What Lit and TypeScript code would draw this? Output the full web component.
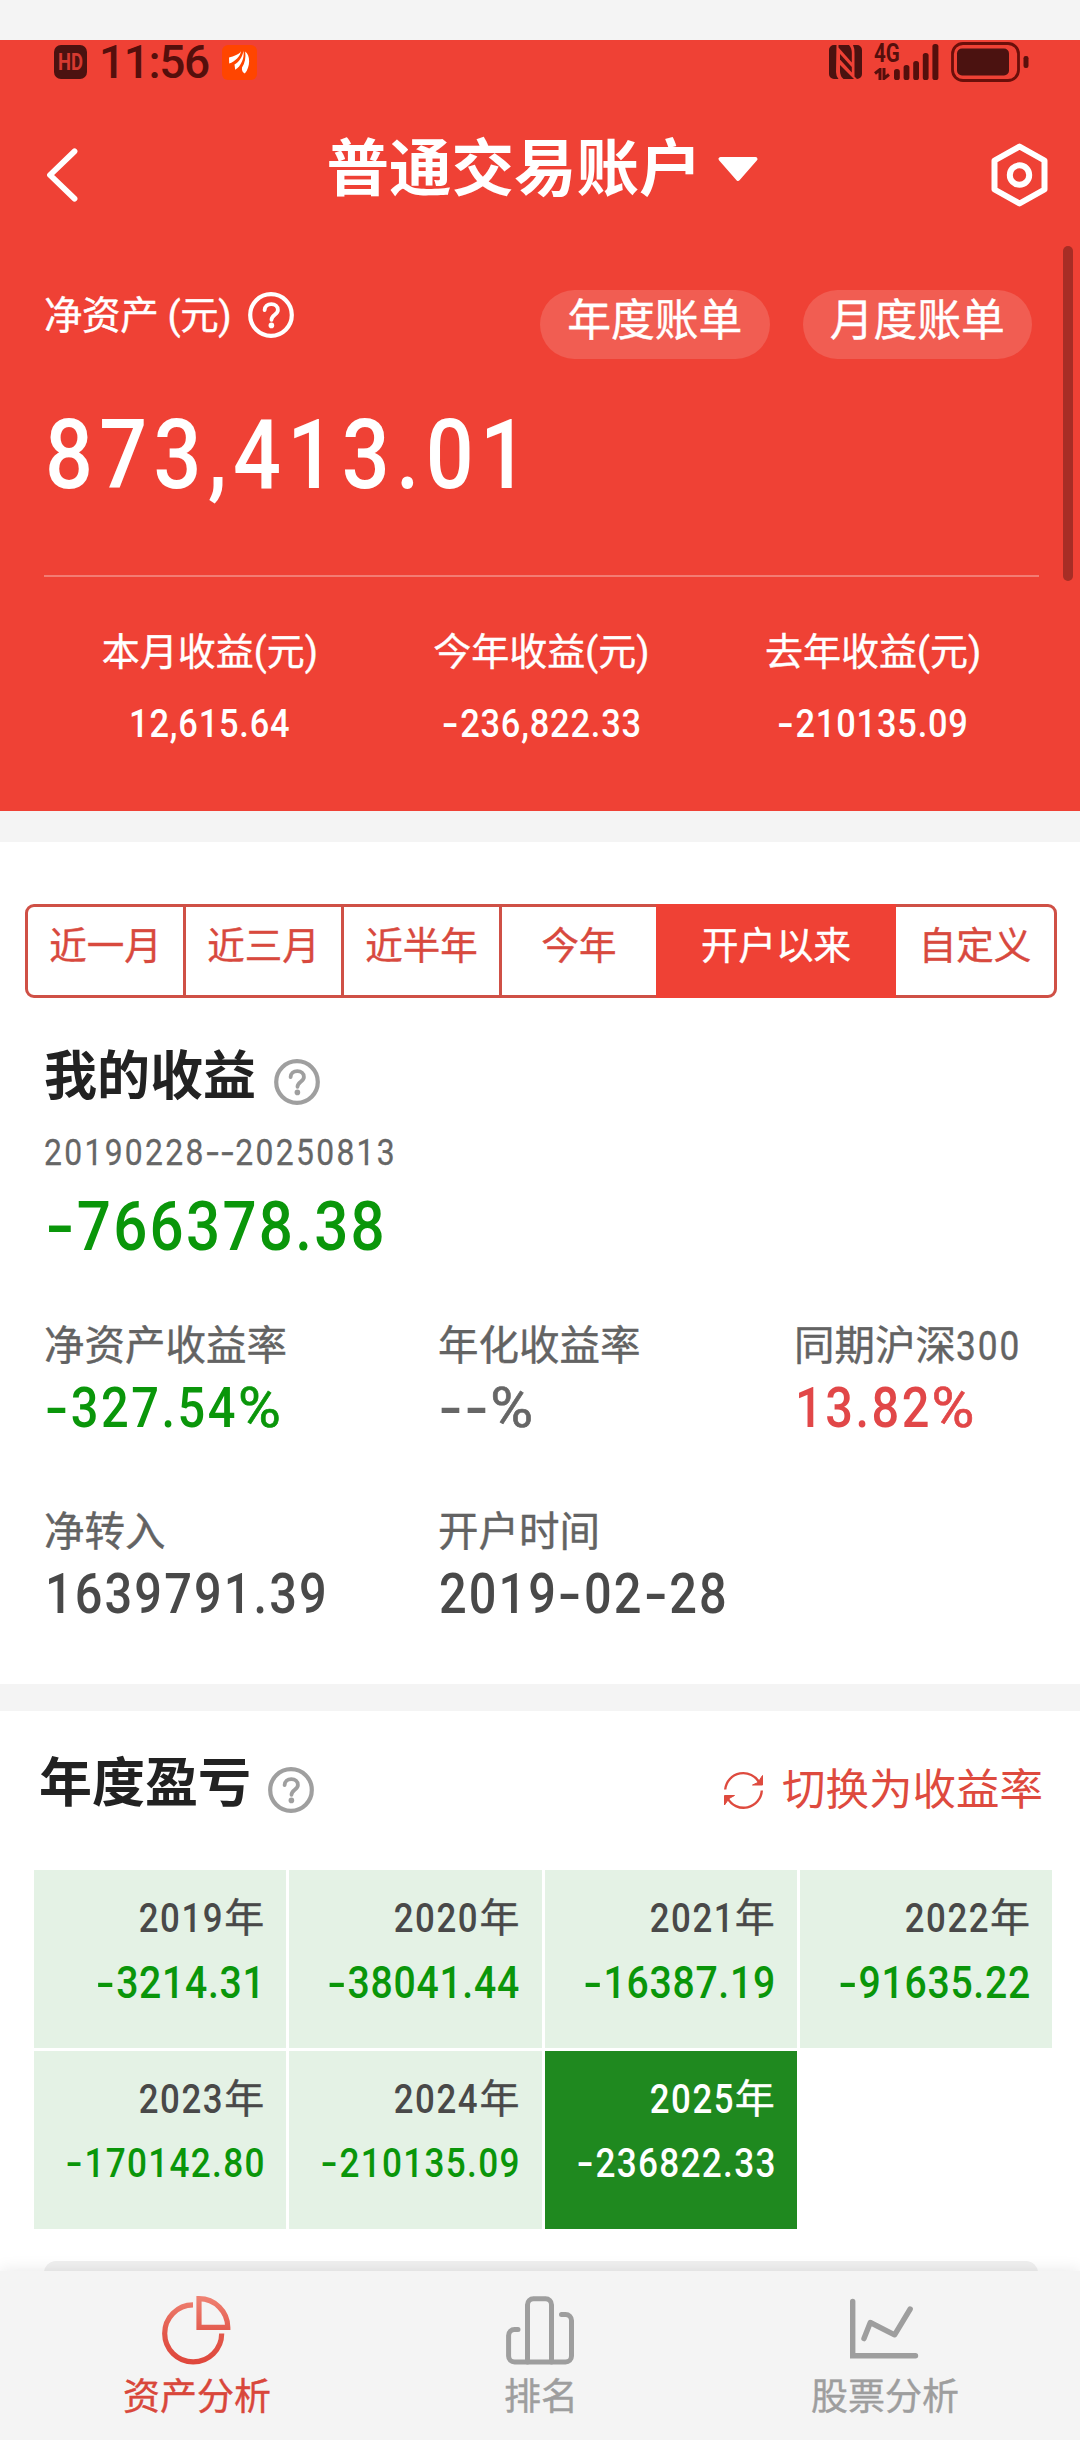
import { LitElement, html, css, svg } from "lit";
import { customElement, property } from "lit/decorators.js";
import { classMap } from "lit/directives/class-map.js";

interface Stat { label: string; digits?: string; value: string; tone: string; }
interface YearCell { year: string; value: string; active?: boolean; }

const SUMMARY = [
  { label: "本月收益(元)", value: "12,615.64" },
  { label: "今年收益(元)", value: "-236,822.33" },
  { label: "去年收益(元)", value: "-210135.09" },
];

const RANGES = ["近一月", "近三月", "近半年", "今年", "开户以来", "自定义"];
const ACTIVE_RANGE = "开户以来";

const STATS: Stat[] = [
  { label: "净资产收益率", value: "-327.54%", tone: "down" },
  { label: "年化收益率", value: "--%", tone: "muted" },
  { label: "同期沪深", digits: "300", value: "13.82%", tone: "up" },
  { label: "净转入", value: "1639791.39", tone: "plain" },
  { label: "开户时间", value: "2019-02-28", tone: "plain" },
];

const YEARS: YearCell[] = [
  { year: "2019", value: "-3214.31" },
  { year: "2020", value: "-38041.44" },
  { year: "2021", value: "-16387.19" },
  { year: "2022", value: "-91635.22" },
  { year: "2023", value: "-170142.80" },
  { year: "2024", value: "-210135.09" },
  { year: "2025", value: "-236822.33", active: true },
];

/** Narrow figures, with the hyphen and the percent sign set wider than the digits. */
const num = (value: string) => html`<span class="num">${value
  .split(/(-|%)/)
  .filter((part) => part !== "")
  .map((part) => part === "-" ? html`<span class="dash">-</span>`
    : part === "%" ? html`<span class="pct">%</span>` : part)}</span>`;

@customElement("help-icon")
export class HelpIcon extends LitElement {
  static styles = css`
    :host { display: block; flex: none; width: 46px; height: 46px; }
    svg { display: block; }
  `;
  render() {
    return html`<svg width="46" height="46" viewBox="0 0 46 46" fill="none" stroke="currentColor">
      <circle cx="23" cy="23" r="20.8" stroke-width="4.2"></circle>
      <path d="M16.6 18.2c.2-3.8 2.9-6 6.7-6s6.6 2.3 6.6 5.7c0 4.8-6.4 4.9-6.4 9.9" stroke-width="3.8" stroke-linecap="round"></path>
      <circle cx="23.4" cy="33.4" r="2.8" fill="currentColor" stroke="none"></circle>
    </svg>`;
  }
}

@customElement("status-bar")
export class StatusBar extends LitElement {
  static styles = css`
    :host { display: flex; align-items: center; height: 44px; padding: 0 51px 0 54px; color: #4b1210;
      font-family: Roboto, "Noto Sans CJK SC", sans-serif; }
    svg { display: block; flex: none; }
    .hd { display: flex; align-items: center; justify-content: center; width: 33px; height: 34px;
      border-radius: 7px; background: #4b1210; color: #d63a30; font-size: 23px; font-weight: 700; }
    .hd span { transform: scaleX(.8); }
    .time { margin-left: 12px; width: 110px; font-size: 46px; line-height: 44px; letter-spacing: -1.4px; font-weight: 500;
      color: #550f0c; white-space: nowrap; }
    .app { margin-left: 13px; }
    .spacer { flex: 1; }
    .net { display: grid; grid-template-columns: 28px 36px; margin-left: 12px; width: 64px; height: 36px; }
    .gen { display: flex; flex-direction: column; gap: 5px; }
    .gen b { display: block; width: 28px; height: 19px; font-size: 25px; line-height: 19px; font-weight: 700; color: #550f0c;
      transform: scaleX(.82); transform-origin: left; }
    .bars { margin-left: -8px; }
    .battery { margin-left: 13px; }
  `;
  render() {
    return html`
      <div class="hd"><span>HD</span></div>
      <div class="time">11:56</div>
      <svg class="app" width="35" height="35" viewBox="0 0 35 35">
        <rect width="35" height="35" rx="6" fill="#ff4500"></rect>
        <g fill="#fff">
          <path d="M7 12.500C12 11 17 9.500 19 6.200 18.500 11 13 16.500 7.200 18.500Z"></path>
          <path d="M12.500 19.500C17 17 20.500 12 21.400 6 22.800 12.500 19 21.500 13.200 24.800Z"></path>
          <path d="M20 22.500C23 18 24 12.500 23.200 6.500 28.500 10 28.500 22 22.800 28.600 20.600 27.500 19.600 25.500 20 22.500Z"></path>
        </g>
      </svg>
      <div class="spacer"></div>
      <svg width="33" height="34" viewBox="0 0 33 34">
        <path d="M7.500 0H5A5 5 0 0 0 0 5V29A5 5 0 0 0 5 34H9.500Q7 31 7 27Z" fill="#4b1210"></path>
        <path d="M9.500 0H20Q22.800 3 22.800 8V17.500L9.500 2.500Z" fill="#4b1210"></path>
        <path d="M11 9L22.800 22V27.500L11 14.500Z" fill="#4b1210"></path>
        <path d="M11 20L25 34H14.500Q11 31 11 26Z" fill="#4b1210"></path>
        <path d="M24 0H28A5 5 0 0 1 33 5V29A5 5 0 0 1 28 34L25.500 31.500V8Q25.500 3 24 0Z" fill="#4b1210"></path>
      </svg>
      <div class="net">
        <div class="gen">
          <b>4G</b>
          <svg width="16" height="12" viewBox="0 0 16 12" fill="none" stroke="#550f0c" stroke-width="3">
            <path d="M6 12V1.500L1 5.500M10 0V10.500L15 6.500"></path>
          </svg>
        </div>
        <svg class="bars" width="45" height="36" viewBox="0 0 45 36" fill="#550f0c">
          <rect x="0" y="25" width="5.800" height="11" rx="2.600"></rect>
          <rect x="9.600" y="21" width="5.800" height="15" rx="2.600"></rect>
          <rect x="19.200" y="17" width="5.800" height="19" rx="2.600"></rect>
          <rect x="28.800" y="9" width="5.800" height="27" rx="2.600"></rect>
          <rect x="38.400" y="0" width="6" height="36" rx="2.600"></rect>
        </svg>
      </div>
      <svg class="battery" width="78" height="40" viewBox="0 0 78 40">
        <rect x="1.500" y="1.500" width="66" height="37" rx="10.500" fill="none" stroke="#6b0f0a" stroke-width="2.800"></rect>
        <rect x="6" y="6.500" width="52" height="27" rx="5" fill="#4b1210"></rect>
        <rect x="72.500" y="14" width="5" height="12" rx="2.200" fill="#5a100c"></rect>
      </svg>`;
  }
}

@customElement("tab-item")
export class TabItem extends LitElement {
  @property() icon = "pie";
  @property() label = "";
  static styles = css`
    :host { display: flex; flex-direction: column; align-items: center; padding-top: 25px; color: #9e9e9e; }
    svg { display: block; }
    .label { margin-top: 11px; padding-left: 2px; height: 44px; line-height: 44px; font-size: 37px; white-space: nowrap;
      -webkit-text-stroke: .4px currentColor; }
  `;
  private art() {
    if (this.icon === "pie") {
      return svg`
        <defs><linearGradient id="g" gradientUnits="userSpaceOnUse" x1="0" y1="0" x2="0" y2="69">
          <stop offset="0" stop-color="#ef8273"></stop><stop offset=".55" stop-color="#e2584b"></stop>
          <stop offset="1" stop-color="#df463b"></stop></linearGradient></defs>
        <g stroke="url(#g)" stroke-width="5.200" fill="none">
          <path d="M31 8.900A28.500 28.500 0 1 0 59.700 37.500"></path>
          <path d="M37 2.700V31.400H65.800A28.800 28.800 0 0 0 37 2.700Z"></path>
        </g>`;
    }
    if (this.icon === "bars") {
      return svg`<g stroke="currentColor" stroke-width="5" fill="none" stroke-linecap="round">
        <path d="M12 33.500H8.600a6 6 0 0 0-6 6V60a6 6 0 0 0 6 6H59.500a6 6 0 0 0 6-6V24.500a6 6 0 0 0-6-6H55.500"></path>
        <path d="M21.500 66V8.700a6 6 0 0 1 6-6h12a6 6 0 0 1 6 6V66"></path>
      </g>`;
    }
    return svg`<g stroke="currentColor" stroke-width="5.400" fill="none" stroke-linecap="round">
      <path d="M2.700 5.500V59.700H65.500" stroke-linejoin="miter"></path>
      <path d="M14 42.600L20.300 26.500 44.600 38.800 60.200 13" stroke-linejoin="round"></path>
    </g>`;
  }
  render() {
    return html`
      <svg width="69" height="69" viewBox="0 0 69 69">${this.art()}</svg>
      <div class="label">${this.label}</div>`;
  }
}

@customElement("app-root")
export class AppRoot extends LitElement {
  static styles = css`
    :host { display: block; width: 1080px; height: 2440px; overflow: hidden; background: #f4f4f4;
      font-family: Roboto, "Noto Sans CJK SC", sans-serif; }
    * { box-sizing: border-box; }
    svg { display: block; flex: none; }
    .page { display: flex; flex-direction: column; height: 2440px; position: relative; }
    .num { display: inline-block; font-weight: 500; letter-spacing: .055em; transform: scaleX(.87);
      transform-origin: left center; white-space: nowrap; }
    .dash { display: inline-block; margin: 0 .08em; letter-spacing: 0; padding-right: .03em; transform: scaleX(1.4); }
    .pct { display: inline-block; margin: 0 .07em; letter-spacing: 0; font-weight: 400; transform: scaleX(1.2);
      -webkit-text-stroke: .012em currentColor; }
    .assets-label, .bill, .summary-label, .range, .stat-label, .year-name > span:last-child {
      -webkit-text-stroke: .4px currentColor; }

    .hero { margin-top: 40px; height: 771px; flex: none; background: #ef4135; color: #fff; }
    .nav { display: grid; grid-template-columns: 1fr auto 1fr; align-items: center; height: 170px; padding: 0 32px 0 37px; }
    .back { margin: 11px 0 0 9px; }
    .account { display: flex; align-items: center; gap: 15px; font-size: 62.500px; line-height: 80px; font-weight: 700; }
    .account span { padding-top: 2px; }
    .gear { margin-top: 11px; justify-self: end; }
    .assets { display: flex; align-items: center; height: 145px; padding: 0 48px 4px 44px; }
    .assets-label { display: flex; align-items: center; margin-bottom: 19px; flex: 1; font-size: 38.500px; line-height: 50px; }
    .assets-label span { width: 204px; padding-top: 2px; white-space: nowrap; letter-spacing: -.4px; }
    .bills { display: flex; gap: 33px; }
    .bill { display: flex; align-items: center; justify-content: center; width: 229.500px; height: 69px; padding-bottom: 7px;
      border-radius: 35px; background: #f15d52; font-size: 43.800px; line-height: 60px; }
    .total { height: 110px; padding-left: 45px; font-size: 97px; line-height: 112px; }
    .total .num { letter-spacing: .075em; }
    .summary { display: grid; grid-template-columns: repeat(3, 1fr); margin: 66px 41px 0 44px; padding-top: 50px;
      border-top: 2px solid #f37c73; }
    .summary-item { display: flex; flex-direction: column; align-items: center; gap: 26px; }
    .summary-label { height: 50px; font-size: 38px; line-height: 51px; }
    .summary-value { height: 40px; font-size: 39.500px; line-height: 42px; }
    .summary-value .num { transform-origin: center; letter-spacing: .024em; }

    .panel { background: #fff; flex: none; }
    .profit { margin-top: 31px; height: 842px; padding-top: 62px; }
    .ranges { display: flex; margin: 0 23px 0 25px; height: 94px; border: 3px solid #cf5046; border-radius: 9px; color: #d8493e; }
    .range { display: flex; align-items: center; justify-content: center; width: 158px; padding-bottom: 10px;
      border-right: 3px solid #cf5046; font-size: 37.500px; line-height: 50px; }
    .range.bare { border-right: 0; }
    .range.short { width: 154px; }
    .range.on { width: 240px; margin: -3px 0; border-right: 0; background: #ef4135; color: #fff; }
    .heading { display: flex; align-items: center; height: 71px; color: #222; font-size: 53px; line-height: 71px; font-weight: 700; }
    .heading span { padding-top: 4px; }
    .heading help-icon { color: #9f9f9f; margin: 13px 0 0 18px; }
    .profit .heading { margin: 42px 0 0 44px; }
    .period { margin: 21px 0 0 44px; height: 40px; color: #666; font-size: 36.600px; line-height: 42px; }
    .period .num { font-weight: 400; letter-spacing: .073em; -webkit-text-stroke: .3px currentColor; }
    .gain { margin: 18px 0 0 45px; height: 71px; font-size: 69px; line-height: 73px; }
    .gain .num { letter-spacing: .038em; }
    .down { color: #0a960a; }
    .up { color: #e14748; }
    .muted { color: #666; }
    .plain { color: #494949; }
    .stats { display: grid; grid-template-columns: 394px 356px 1fr; row-gap: 69px; margin: 59px 0 0 44px; }
    .stat-label { height: 50px; color: #636363; font-size: 40.500px; line-height: 52px; white-space: nowrap; }
    .stat-label .num { font-weight: 400; }
    .stat-value { margin-top: 7px; height: 60px; padding-left: 1px; font-size: 56px; line-height: 62px; }
    .stat-value .num { letter-spacing: .052em; }
    .stat-value.plain .num { letter-spacing: .043em; }

    .yearly { margin-top: 27px; height: 560px; padding-top: 36px; overflow: hidden; }
    .yearly-head { display: flex; align-items: center; height: 73px; padding: 0 37px 0 39px; }
    .yearly-head .heading { flex: 1; }
    .yearly-head .heading span { padding-top: 2px; }
    .yearly-head help-icon { margin: 12px 0 0 17px; }
    .switch { display: flex; align-items: center; gap: 19px; margin-top: 13px; color: #de4a3e; font-size: 43.500px; line-height: 60px; }
    .switch span { padding-top: 2px; }
    .years { display: grid; grid-template-columns: repeat(4, 1fr); grid-auto-rows: 178.300px; gap: 2.700px 3px; margin: 50px 28px 0 34px; }
    .year { display: flex; flex-direction: column; align-items: flex-end; gap: 14px; padding: 24px 22px 0 0; background: #e4f2e5; }
    .year .num { transform-origin: right center; margin-right: -.055em; }
    .year-name { display: flex; height: 50px; line-height: 50px; font-size: 40px; color: #494949; }
    .year-name .num { margin-right: 0; letter-spacing: .045em; }
    .year-value { height: 50px; line-height: 50px; font-size: 45px; color: #0a960a; }
    .year-value .num { letter-spacing: .018em; margin-right: -.018em; }
    .year-value.long { font-size: 40.400px; }
    .year-value.long .num { letter-spacing: .037em; margin-right: -.037em; }
    .year.on { background: #1f891f; }
    .year.on .year-name, .year.on .year-value { color: #fff; }
    .peek { margin: 32px 42px 0 44px; height: 60px; border-radius: 12px; background: #f0f0f0; }

    .tabs { position: absolute; left: 0; bottom: 0; width: 1080px; height: 169px; display: grid;
      grid-template-columns: repeat(3, 1fr); padding: 0 24px; background: #f4f4f4; box-shadow: 0 0 16px rgba(0, 0, 0, .1); }
    .tabs tab-item.current { color: #d9473b; }
    .thumb { position: absolute; left: 1063px; top: 246px; width: 10px; height: 335px; border-radius: 5px; background: #a72d25; }
  `;

  private isLong(v: string) { return v.length > 9; }

  render() {
    return html`<div class="page">
      <header class="hero">
        <status-bar></status-bar>
        <div class="nav">
          <svg class="back" width="32" height="54" viewBox="0 0 32 54" fill="none" stroke="#fff" stroke-width="5.800" stroke-linecap="round" stroke-linejoin="round">
            <path d="M28.500 3.300L4 27 28.500 50.700"></path>
          </svg>
          <div class="account"><span>普通交易账户</span>
            <svg width="42" height="26" viewBox="0 0 42 26"><path d="M3.500 3H38.500L21 23Z" fill="#fff" stroke="#fff" stroke-width="4" stroke-linejoin="round"></path></svg>
          </div>
          <svg class="gear" width="57" height="64" viewBox="0 0 57 64" fill="none" stroke="#fff" stroke-width="6" stroke-linejoin="round">
            <path d="M28.500 3.500L53.500 17.500V46.500L28.500 60.500 3.500 46.500V17.500Z"></path>
            <circle cx="28.500" cy="32" r="9.700"></circle>
          </svg>
        </div>
        <div class="assets">
          <div class="assets-label"><span>净资产 (元)</span><help-icon></help-icon></div>
          <div class="bills"><div class="bill">年度账单</div><div class="bill">月度账单</div></div>
        </div>
        <div class="total">${num("873,413.01")}</div>
        <div class="summary">
          ${SUMMARY.map((s) => html`<div class="summary-item">
            <div class="summary-label">${s.label}</div>
            <div class="summary-value">${num(s.value)}</div>
          </div>`)}
        </div>
      </header>

      <section class="panel profit">
        <div class="ranges">
          ${RANGES.map((r, i) => html`<div class=${classMap({
            range: true, on: r === ACTIVE_RANGE, short: r === "今年", bare: r === "今年" || i === RANGES.length - 1,
          })}>${r}</div>`)}
        </div>
        <div class="heading"><span>我的收益</span><help-icon></help-icon></div>
        <div class="period">${num("20190228--20250813")}</div>
        <div class="gain down">${num("-766378.38")}</div>
        <div class="stats">
          ${STATS.map((s) => html`<div class="stat">
            <div class="stat-label">${s.label}${s.digits ? num(s.digits) : ""}</div>
            <div class="stat-value ${s.tone}">${num(s.value)}</div>
          </div>`)}
        </div>
      </section>

      <section class="panel yearly">
        <div class="yearly-head">
          <div class="heading"><span>年度盈亏</span><help-icon></help-icon></div>
          <div class="switch">
            <svg width="39" height="39" viewBox="0 0 39 39" fill="none" stroke="currentColor" stroke-width="2.400">
              <path d="M1.200 18.500A18.200 18.200 0 0 1 35.500 12"></path>
              <path d="M37.800 19.500A18.200 18.200 0 0 1 3.500 27"></path>
              <path d="M38.500 4.500V14H28.500L34 11.500Z" fill="currentColor" stroke-width="1"></path>
              <path d="M.500 34V24.500H10.500L5 27.500Z" fill="currentColor" stroke-width="1"></path>
            </svg>
            <span>切换为收益率</span>
          </div>
        </div>
        <div class="years">
          ${YEARS.map((y) => html`<div class=${classMap({ year: true, on: !!y.active })}>
            <div class="year-name">${num(y.year)}<span>年</span></div>
            <div class=${classMap({ "year-value": true, long: this.isLong(y.value) })}>${num(y.value)}</div>
          </div>`)}
        </div>
        <div class="peek"></div>
      </section>

      <nav class="tabs">
        <tab-item class="current" icon="pie" label="资产分析"></tab-item>
        <tab-item icon="bars" label="排名"></tab-item>
        <tab-item icon="line" label="股票分析"></tab-item>
      </nav>
      <div class="thumb"></div>
    </div>`;
  }
}
